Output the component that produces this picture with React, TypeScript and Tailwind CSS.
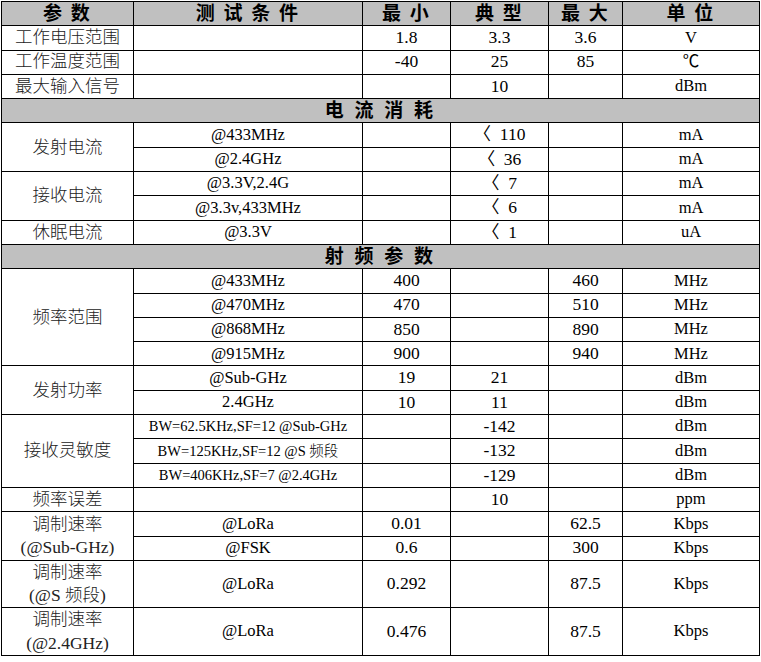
const cell = "border border-black text-center p-0 leading-none";

type Row = {
  name?: string | string[];
  span?: number;
  cond: string;
  min: string;
  typ: string;
  max: string;
  unit: string;
  tall?: boolean;
  small?: boolean;
};

const power: Row[] = [
  { name: "工作电压范围", cond: "", min: "1.8", typ: "3.3", max: "3.6", unit: "V" },
  { name: "工作温度范围", cond: "", min: "-40", typ: "25", max: "85", unit: "℃" },
  { name: "最大输入信号", cond: "", min: "", typ: "10", max: "", unit: "dBm" },
];

const current: Row[] = [
  { name: "发射电流", span: 2, cond: "@433MHz", min: "", typ: "〈\u2002110", max: "", unit: "mA" },
  { cond: "@2.4GHz", min: "", typ: "〈\u200236", max: "", unit: "mA" },
  { name: "接收电流", span: 2, cond: "@3.3V,2.4G", min: "", typ: "〈\u20027", max: "", unit: "mA" },
  { cond: "@3.3v,433MHz", min: "", typ: "〈\u20026", max: "", unit: "mA" },
  { name: "休眠电流", cond: "@3.3V", min: "", typ: "〈\u20021", max: "", unit: "uA" },
];

const rf: Row[] = [
  { name: "频率范围", span: 4, cond: "@433MHz", min: "400", typ: "", max: "460", unit: "MHz" },
  { cond: "@470MHz", min: "470", typ: "", max: "510", unit: "MHz" },
  { cond: "@868MHz", min: "850", typ: "", max: "890", unit: "MHz" },
  { cond: "@915MHz", min: "900", typ: "", max: "940", unit: "MHz" },
  { name: "发射功率", span: 2, cond: "@Sub-GHz", min: "19", typ: "21", max: "", unit: "dBm" },
  { cond: "2.4GHz", min: "10", typ: "11", max: "", unit: "dBm" },
  { name: "接收灵敏度", span: 3, cond: "BW=62.5KHz,SF=12 @Sub-GHz", min: "", typ: "-142", max: "", unit: "dBm", small: true },
  { cond: "BW=125KHz,SF=12 @S 频段", min: "", typ: "-132", max: "", unit: "dBm", small: true },
  { cond: "BW=406KHz,SF=7 @2.4GHz", min: "", typ: "-129", max: "", unit: "dBm", small: true },
  { name: "频率误差", cond: "", min: "", typ: "10", max: "", unit: "ppm" },
  { name: ["调制速率", "(@Sub-GHz)"], span: 2, cond: "@LoRa", min: "0.01", typ: "", max: "62.5", unit: "Kbps" },
  { cond: "@FSK", min: "0.6", typ: "", max: "300", unit: "Kbps" },
  { name: ["调制速率", "(@S 频段)"], cond: "@LoRa", min: "0.292", typ: "", max: "87.5", unit: "Kbps", tall: true },
  { name: ["调制速率", "(@2.4GHz)"], cond: "@LoRa", min: "0.476", typ: "", max: "87.5", unit: "Kbps", tall: true },
];

function DataRow({ row }: { row: Row }) {
  return (
    <tr className={row.tall ? "h-[47.6px]" : "h-[24.3px]"}>
      {row.name !== undefined && (
        <td rowSpan={row.span ?? 1} className={`${cell} text-[17.5px] font-light text-[#222]`}>
          {Array.isArray(row.name) ? (
            <div className="flex flex-col gap-[6px]">
              {row.name.map((l) => (
                <span key={l}>{l}</span>
              ))}
            </div>
          ) : (
            row.name
          )}
        </td>
      )}
      <td className={`${cell} font-light ${row.small ? "text-[14.5px]" : "text-[16.5px]"}`}>{row.cond}</td>
      <td className={`${cell} text-[17.5px]`}>{row.min}</td>
      <td className={`${cell} text-[17.5px]`}>{row.typ}</td>
      <td className={`${cell} text-[17.5px]`}>{row.max}</td>
      <td className={`${cell} text-[16.5px]`}>{row.unit}</td>
    </tr>
  );
}

function Section({ title }: { title: string }) {
  return (
    <tr className="h-[24.3px] bg-[#c0c0c0]">
      <td colSpan={6} className={`${cell} text-[19px] font-bold tracking-[3px]`}>
        {title}
      </td>
    </tr>
  );
}

export default function App() {
  const heads = ["参 数", "测 试 条 件", "最 小", "典 型", "最 大", "单 位"];
  return (
    <div className="min-h-screen bg-white pl-[1px] pt-[1px] text-black font-['Liberation_Serif','Noto_Sans_CJK_SC',serif]">
      <table className="w-[758px] table-fixed border-collapse">
        <colgroup>
          <col className="w-[132px]" />
          <col className="w-[229px]" />
          <col className="w-[88px]" />
          <col className="w-[98px]" />
          <col className="w-[74px]" />
          <col className="w-[137px]" />
        </colgroup>
        <tbody>
          <tr className="h-[24.3px] bg-[#c0c0c0]">
            {heads.map((h) => (
              <td key={h} className={`${cell} text-[19px] font-bold tracking-[2px]`}>
                {h}
              </td>
            ))}
          </tr>
          {power.map((r, i) => (
            <DataRow key={`p${i}`} row={r} />
          ))}
          <Section title="电 流 消 耗" />
          {current.map((r, i) => (
            <DataRow key={`c${i}`} row={r} />
          ))}
          <Section title="射 频 参 数" />
          {rf.map((r, i) => (
            <DataRow key={`r${i}`} row={r} />
          ))}
        </tbody>
      </table>
    </div>
  );
}
